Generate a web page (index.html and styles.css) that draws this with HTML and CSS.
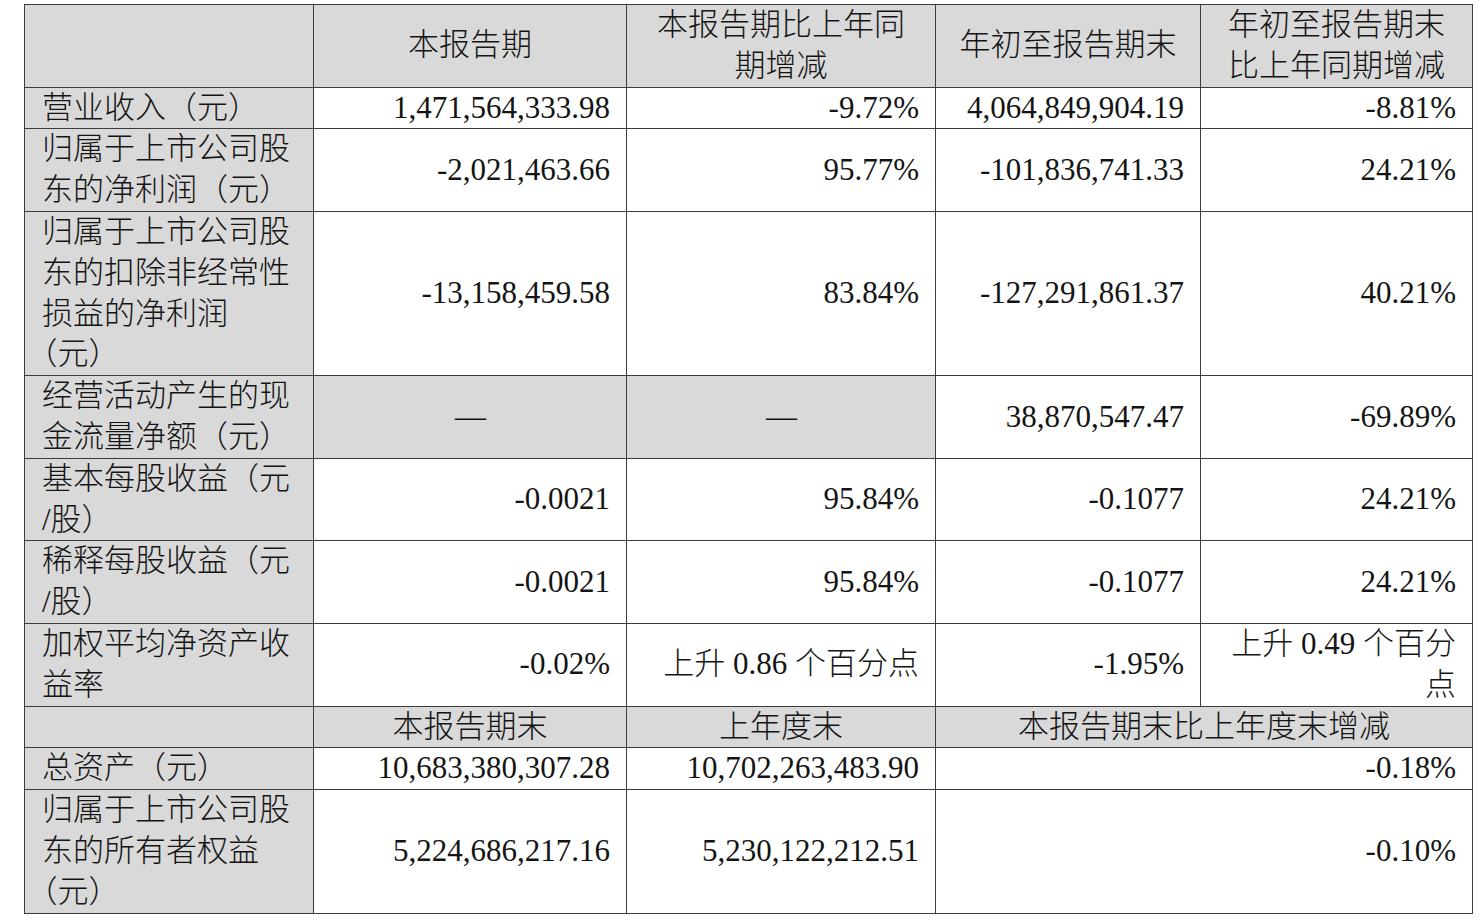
FILE: index.html
```html
<!DOCTYPE html>
<html lang="zh-CN">
<head>
<meta charset="utf-8">
<title>主要财务数据</title>
<link rel="stylesheet" href="styles.css">
</head>
<body>
<table class="fin">
  <colgroup>
    <col class="c1"><col class="c2"><col class="c3"><col class="c4"><col class="c5">
  </colgroup>
  <tr class="head">
    <td class="label"></td>
    <td>本报告期</td>
    <td>本报告期比上年同<br>期增减</td>
    <td>年初至报告期末</td>
    <td>年初至报告期末<br>比上年同期增减</td>
  </tr>
  <tr>
    <td class="label">营业收入（元）</td>
    <td class="num">1,471,564,333.98</td>
    <td class="num">-9.72%</td>
    <td class="num">4,064,849,904.19</td>
    <td class="num">-8.81%</td>
  </tr>
  <tr>
    <td class="label">归属于上市公司股<br>东的净利润（元）</td>
    <td class="num">-2,021,463.66</td>
    <td class="num">95.77%</td>
    <td class="num">-101,836,741.33</td>
    <td class="num">24.21%</td>
  </tr>
  <tr>
    <td class="label">归属于上市公司股<br>东的扣除非经常性<br>损益的净利润<br>（元）</td>
    <td class="num">-13,158,459.58</td>
    <td class="num">83.84%</td>
    <td class="num">-127,291,861.37</td>
    <td class="num">40.21%</td>
  </tr>
  <tr>
    <td class="label">经营活动产生的现<br>金流量净额（元）</td>
    <td class="dash">—</td>
    <td class="dash">—</td>
    <td class="num">38,870,547.47</td>
    <td class="num">-69.89%</td>
  </tr>
  <tr>
    <td class="label">基本每股收益（元<br>/股）</td>
    <td class="num">-0.0021</td>
    <td class="num">95.84%</td>
    <td class="num">-0.1077</td>
    <td class="num">24.21%</td>
  </tr>
  <tr>
    <td class="label">稀释每股收益（元<br>/股）</td>
    <td class="num">-0.0021</td>
    <td class="num">95.84%</td>
    <td class="num">-0.1077</td>
    <td class="num">24.21%</td>
  </tr>
  <tr>
    <td class="label">加权平均净资产收<br>益率</td>
    <td class="num">-0.02%</td>
    <td class="num">上升 0.86 个百分点</td>
    <td class="num">-1.95%</td>
    <td class="num">上升 0.49 个百分<br>点</td>
  </tr>
  <tr class="head">
    <td class="label"></td>
    <td>本报告期末</td>
    <td>上年度末</td>
    <td colspan="2">本报告期末比上年度末增减</td>
  </tr>
  <tr>
    <td class="label">总资产（元）</td>
    <td class="num">10,683,380,307.28</td>
    <td class="num">10,702,263,483.90</td>
    <td class="num" colspan="2">-0.18%</td>
  </tr>
  <tr>
    <td class="label">归属于上市公司股<br>东的所有者权益<br>（元）</td>
    <td class="num">5,224,686,217.16</td>
    <td class="num">5,230,122,212.51</td>
    <td class="num" colspan="2">-0.10%</td>
  </tr>
</table>
</body>
</html>
```

FILE: styles.css
```css
html, body {
  margin: 0;
  padding: 0;
  background: #ffffff;
}

body {
  padding: 4px 0 0 24px;
}

.fin {
  border-collapse: collapse;
  table-layout: fixed;
  width: 1448px;
  font-family: "Liberation Serif", "Noto Sans CJK SC", serif;
  font-size: 31px;
  line-height: 40.8px;
  color: #141414;
  font-weight: 300;
}

.c1 { width: 289px; }
.c2 { width: 313px; }
.c3 { width: 309px; }
.c4 { width: 265px; }
.c5 { width: 272px; }

.fin td {
  border: 1px solid #3c3c3c;
  padding: 0 16px 0 17px;
  vertical-align: middle;
  white-space: nowrap;
}

.fin .head td {
  background: #d9d9d9;
  text-align: center;
  padding: 0 4px;
}

.fin td.label {
  background: #d9d9d9;
  text-align: left;
  text-spacing-trim: trim-start;
}

.fin td.num {
  text-align: right;
}

.fin td.dash {
  background: #d9d9d9;
  text-align: center;
}
```
